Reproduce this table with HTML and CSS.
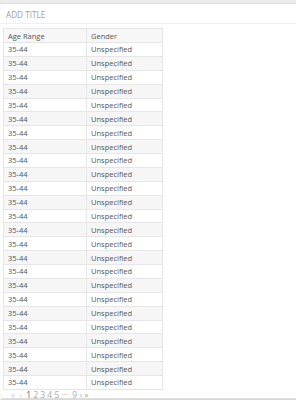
FILE: index.html
```html
<!DOCTYPE html>
<html>
<head>
<meta charset="utf-8">
<link rel="stylesheet" href="styles.css">
</head>
<body>
<div class="prev-card"></div>
<div class="card">
  <div class="title">ADD TITLE</div>
  <div class="body">
    <table class="grid">
      <thead>
        <tr><th>Age Range</th><th>Gender</th></tr>
      </thead>
      <tbody>
        <tr><td>35-44</td><td>Unspecified</td></tr>
        <tr><td>35-44</td><td>Unspecified</td></tr>
        <tr><td>35-44</td><td>Unspecified</td></tr>
        <tr><td>35-44</td><td>Unspecified</td></tr>
        <tr><td>35-44</td><td>Unspecified</td></tr>
        <tr><td>35-44</td><td>Unspecified</td></tr>
        <tr><td>35-44</td><td>Unspecified</td></tr>
        <tr><td>35-44</td><td>Unspecified</td></tr>
        <tr><td>35-44</td><td>Unspecified</td></tr>
        <tr><td>35-44</td><td>Unspecified</td></tr>
        <tr><td>35-44</td><td>Unspecified</td></tr>
        <tr><td>35-44</td><td>Unspecified</td></tr>
        <tr><td>35-44</td><td>Unspecified</td></tr>
        <tr><td>35-44</td><td>Unspecified</td></tr>
        <tr><td>35-44</td><td>Unspecified</td></tr>
        <tr><td>35-44</td><td>Unspecified</td></tr>
        <tr><td>35-44</td><td>Unspecified</td></tr>
        <tr><td>35-44</td><td>Unspecified</td></tr>
        <tr><td>35-44</td><td>Unspecified</td></tr>
        <tr><td>35-44</td><td>Unspecified</td></tr>
        <tr><td>35-44</td><td>Unspecified</td></tr>
        <tr><td>35-44</td><td>Unspecified</td></tr>
        <tr><td>35-44</td><td>Unspecified</td></tr>
        <tr><td>35-44</td><td>Unspecified</td></tr>
        <tr><td>35-44</td><td>Unspecified</td></tr>
      </tbody>
    </table>
    <div class="pager">
      <span class="dim">«</span><span class="dim">‹</span><span class="cur">1</span><span>2</span><span>3</span><span>4</span><span>5</span><span class="dots">···</span><span>9</span><span>›</span><span>»</span>
    </div>
  </div>
</div>
<div class="shadow"></div>
</body>
</html>
```
FILE: styles.css
```css
html, body {
  margin: 0;
  padding: 0;
  background: #ffffff;
  font-family: "Open Sans", "Liberation Sans", sans-serif;
}
.prev-card {
  height: 3px;
  background: #ececec;
  border-bottom: 1px solid #dcdcdc;
}
.card {
  margin-top: 2px;
  background: #fff;
  border-radius: 6px 0 0 6px;
  box-shadow: -1px 0 1px rgba(0,0,0,0.06);
}
.title {
  height: 15px;
  padding: 2px 0 0 6px;
  font-size: 8.2px;
  line-height: 14px;
  color: #a0a0a0;
  border-bottom: 1px solid #efefef;
}
.body {
  padding: 4px 0 0 3px;
}
.grid {
  border-collapse: collapse;
  border: 1px solid #d9d9d9;
  font-size: 7.5px;
  color: #555;
}
.grid th, .grid td {
  border: 1px solid #e6e6e6;
  padding: 0 0 0 4px;
  height: 12.875px;
  text-align: left;
  font-weight: normal;
  vertical-align: middle;
  line-height: 10px;
}
.grid th:first-child, .grid td:first-child { width: 78px; }
.grid th:last-child, .grid td:last-child { width: 71px; }
.grid th { background: #f7f7f7; height: 13px; }
.grid tbody tr:nth-child(even) td { background: #f6f6f6; }
.pager {
  display: flex;
  gap: 2.2px;
  padding-left: 8px;
  font-size: 8.5px;
  line-height: 9px;
  color: #aaa;
  height: 8px;
}
.pager .dim { color: #d0d0d0; margin-right: 2px; }
.pager .cur { color: #666; }
.pager .dots { margin-right: 2px; }
.shadow {
  height: 3px;
  background: linear-gradient(#e0e0e0, #d0d0d0);
  border-radius: 6px 0 0 0;
}
```
